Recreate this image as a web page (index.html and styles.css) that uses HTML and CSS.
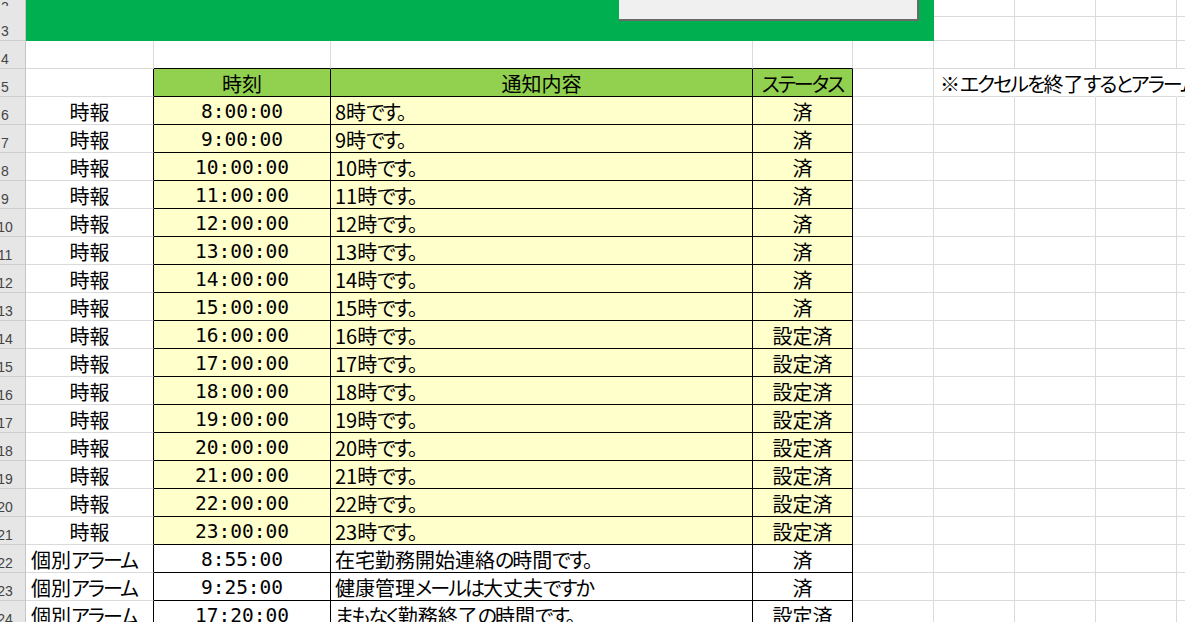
FILE: index.html
```html
<!DOCTYPE html>
<html lang="ja">
<head>
<meta charset="utf-8">
<title>アラーム</title>
<link rel="stylesheet" href="styles.css">
</head>
<body>
<div class="sheet">
  <div class="btn"><span>アラーム開始</span></div>

  <div class="row r2"><div class="c h">2</div><div class="green"></div><div class="c"></div><div class="c"></div><div class="c"></div><div class="c"></div></div>
  <div class="row r3"><div class="c h">3</div><div class="green"></div><div class="c"></div><div class="c"></div><div class="c"></div><div class="c"></div></div>
  <div class="row"><div class="c h">4</div><div class="c"></div><div class="c top"></div><div class="c top"></div><div class="c top"></div><div class="c"></div><div class="c"></div><div class="c"></div><div class="c"></div><div class="c"></div></div>
  <div class="row"><div class="c h">5</div><div class="c edge"></div><div class="c t hd">時刻</div><div class="c t hd">通知内容</div><div class="c t hd"><span class="k">ステータス</span></div><div class="c"></div><div class="c nor note">※<span class="k">エクセルを</span>終了<span class="k">するとアラームが</span>停止<span class="k">します。</span></div><div class="c nor"></div><div class="c nor"></div><div class="c nor"></div></div>

  <div class="row"><div class="c h">6</div><div class="c edge ctr">時報</div><div class="c t y num">8:00:00</div><div class="c t y txt">8時<span class="k">です。</span></div><div class="c t y ctr">済</div><div class="c"></div><div class="c"></div><div class="c"></div><div class="c"></div><div class="c"></div></div>
  <div class="row"><div class="c h">7</div><div class="c edge ctr">時報</div><div class="c t y num">9:00:00</div><div class="c t y txt">9時<span class="k">です。</span></div><div class="c t y ctr">済</div><div class="c"></div><div class="c"></div><div class="c"></div><div class="c"></div><div class="c"></div></div>
  <div class="row"><div class="c h">8</div><div class="c edge ctr">時報</div><div class="c t y num">10:00:00</div><div class="c t y txt">10時<span class="k">です。</span></div><div class="c t y ctr">済</div><div class="c"></div><div class="c"></div><div class="c"></div><div class="c"></div><div class="c"></div></div>
  <div class="row"><div class="c h">9</div><div class="c edge ctr">時報</div><div class="c t y num">11:00:00</div><div class="c t y txt">11時<span class="k">です。</span></div><div class="c t y ctr">済</div><div class="c"></div><div class="c"></div><div class="c"></div><div class="c"></div><div class="c"></div></div>
  <div class="row"><div class="c h">10</div><div class="c edge ctr">時報</div><div class="c t y num">12:00:00</div><div class="c t y txt">12時<span class="k">です。</span></div><div class="c t y ctr">済</div><div class="c"></div><div class="c"></div><div class="c"></div><div class="c"></div><div class="c"></div></div>
  <div class="row"><div class="c h">11</div><div class="c edge ctr">時報</div><div class="c t y num">13:00:00</div><div class="c t y txt">13時<span class="k">です。</span></div><div class="c t y ctr">済</div><div class="c"></div><div class="c"></div><div class="c"></div><div class="c"></div><div class="c"></div></div>
  <div class="row"><div class="c h">12</div><div class="c edge ctr">時報</div><div class="c t y num">14:00:00</div><div class="c t y txt">14時<span class="k">です。</span></div><div class="c t y ctr">済</div><div class="c"></div><div class="c"></div><div class="c"></div><div class="c"></div><div class="c"></div></div>
  <div class="row"><div class="c h">13</div><div class="c edge ctr">時報</div><div class="c t y num">15:00:00</div><div class="c t y txt">15時<span class="k">です。</span></div><div class="c t y ctr">済</div><div class="c"></div><div class="c"></div><div class="c"></div><div class="c"></div><div class="c"></div></div>
  <div class="row"><div class="c h">14</div><div class="c edge ctr">時報</div><div class="c t y num">16:00:00</div><div class="c t y txt">16時<span class="k">です。</span></div><div class="c t y ctr">設定済</div><div class="c"></div><div class="c"></div><div class="c"></div><div class="c"></div><div class="c"></div></div>
  <div class="row"><div class="c h">15</div><div class="c edge ctr">時報</div><div class="c t y num">17:00:00</div><div class="c t y txt">17時<span class="k">です。</span></div><div class="c t y ctr">設定済</div><div class="c"></div><div class="c"></div><div class="c"></div><div class="c"></div><div class="c"></div></div>
  <div class="row"><div class="c h">16</div><div class="c edge ctr">時報</div><div class="c t y num">18:00:00</div><div class="c t y txt">18時<span class="k">です。</span></div><div class="c t y ctr">設定済</div><div class="c"></div><div class="c"></div><div class="c"></div><div class="c"></div><div class="c"></div></div>
  <div class="row"><div class="c h">17</div><div class="c edge ctr">時報</div><div class="c t y num">19:00:00</div><div class="c t y txt">19時<span class="k">です。</span></div><div class="c t y ctr">設定済</div><div class="c"></div><div class="c"></div><div class="c"></div><div class="c"></div><div class="c"></div></div>
  <div class="row"><div class="c h">18</div><div class="c edge ctr">時報</div><div class="c t y num">20:00:00</div><div class="c t y txt">20時<span class="k">です。</span></div><div class="c t y ctr">設定済</div><div class="c"></div><div class="c"></div><div class="c"></div><div class="c"></div><div class="c"></div></div>
  <div class="row"><div class="c h">19</div><div class="c edge ctr">時報</div><div class="c t y num">21:00:00</div><div class="c t y txt">21時<span class="k">です。</span></div><div class="c t y ctr">設定済</div><div class="c"></div><div class="c"></div><div class="c"></div><div class="c"></div><div class="c"></div></div>
  <div class="row"><div class="c h">20</div><div class="c edge ctr">時報</div><div class="c t y num">22:00:00</div><div class="c t y txt">22時<span class="k">です。</span></div><div class="c t y ctr">設定済</div><div class="c"></div><div class="c"></div><div class="c"></div><div class="c"></div><div class="c"></div></div>
  <div class="row"><div class="c h">21</div><div class="c edge ctr">時報</div><div class="c t y num">23:00:00</div><div class="c t y txt">23時<span class="k">です。</span></div><div class="c t y ctr">設定済</div><div class="c"></div><div class="c"></div><div class="c"></div><div class="c"></div><div class="c"></div></div>
  <div class="row"><div class="c h">22</div><div class="c edge ctr wide">個別<span class="k">アラーム</span></div><div class="c t num">8:55:00</div><div class="c t txt">在宅勤務開始連絡<span class="k">の</span>時間<span class="k">です。</span></div><div class="c t ctr">済</div><div class="c"></div><div class="c"></div><div class="c"></div><div class="c"></div><div class="c"></div></div>
  <div class="row"><div class="c h">23</div><div class="c edge ctr wide">個別<span class="k">アラーム</span></div><div class="c t num">9:25:00</div><div class="c t txt">健康管理<span class="k">メールは</span>大丈夫<span class="k">ですか</span></div><div class="c t ctr">済</div><div class="c"></div><div class="c"></div><div class="c"></div><div class="c"></div><div class="c"></div></div>
  <div class="row"><div class="c h">24</div><div class="c edge ctr wide">個別<span class="k">アラーム</span></div><div class="c t num">17:20:00</div><div class="c t txt"><span class="k">まもなく</span>勤務終了<span class="k">の</span>時間<span class="k">です。</span></div><div class="c t ctr">設定済</div><div class="c"></div><div class="c"></div><div class="c"></div><div class="c"></div><div class="c"></div></div>
</div>
</body>
</html>
```
FILE: styles.css
```css
html, body {
  margin: 0;
  padding: 0;
  overflow: hidden;
  background: #ffffff;
}
body {
  width: 1185px;
  height: 622px;
  font-family: "Noto Sans CJK JP", "Noto Sans", sans-serif;
  color: #000;
}
.sheet {
  position: relative;
}
.row {
  display: grid;
  grid-template-columns: 26px 128px 177px 422px 100px 81px 81px 81px 81px 100px;
  height: 28px;
}
.r2 { height: 6px; }
.r3 { height: 35px; }

.c {
  box-sizing: border-box;
  min-width: 0;
  border-right: 1px solid #dadada;
  border-bottom: 1px solid #dadada;
  display: flex;
  align-items: center;
  white-space: nowrap;
  font-size: 20px;
  line-height: 20px;
  font-feature-settings: "palt";
  padding-top: 2px;
}
.k { letter-spacing: -2px; }
.h {
  background: #e6e6e6;
  border-right-color: #c4c4c4;
  border-bottom-color: #cdcdcd;
  color: #444;
  font-family: "Liberation Sans", sans-serif;
  font-size: 14px;
  line-height: 14px;
  font-feature-settings: normal;
  justify-content: center;
  align-items: flex-end;
  padding: 0 15px 2px 0;
}
.green {
  grid-column: span 5;
  background: #00b050;
}
.edge { border-right-color: #000; }
.top { border-bottom-color: #000; }
.t {
  border-right-color: #000;
  border-bottom-color: #000;
}
.hd {
  background: #92d050;
  justify-content: center;
}
.y { background: #ffffcc; }
.ctr { justify-content: center; }
.wide { padding-right: 11px; }
.txt { padding-left: 4px; }
.num {
  justify-content: center;
  font-family: "DejaVu Sans Mono", monospace;
  font-size: 19.5px;
  font-feature-settings: normal;
}
.nor { border-right-color: transparent; }
.note { padding-left: 6px; }

.btn {
  position: absolute;
  left: 619px;
  top: -39px;
  width: 300px;
  height: 60px;
  box-sizing: border-box;
  background: #f0f0f0;
  border-right: 2px solid #6a6a6a;
  border-bottom: 2px solid #6a6a6a;
  display: flex;
  justify-content: center;
  align-items: flex-end;
  padding-bottom: 21px;
  font-size: 16px;
  line-height: 16px;
  z-index: 2;
}
```
